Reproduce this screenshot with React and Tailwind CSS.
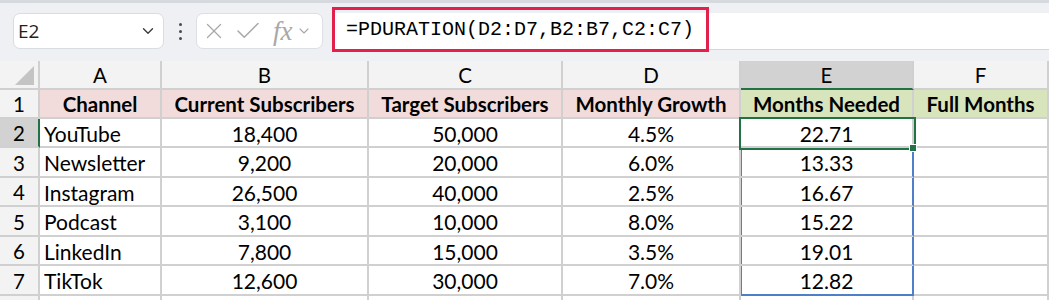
import { X, Check, ChevronDown } from 'lucide-react';

const cols = ['A', 'B', 'C', 'D', 'E', 'F'];

const headers = ['Channel', 'Current Subscribers', 'Target Subscribers', 'Monthly Growth', 'Months Needed', 'Full Months'];

const rows = [
  ['YouTube', '18,400', '50,000', '4.5%', '22.71'],
  ['Newsletter', '9,200', '20,000', '6.0%', '13.33'],
  ['Instagram', '26,500', '40,000', '2.5%', '16.67'],
  ['Podcast', '3,100', '10,000', '8.0%', '15.22'],
  ['LinkedIn', '7,800', '15,000', '3.5%', '19.01'],
  ['TikTok', '12,600', '30,000', '7.0%', '12.82'],
];

const cell = 'flex items-center pt-[2px] border-r-2 border-b-2 border-[#d0d0d0] text-[20.5px] text-black whitespace-nowrap overflow-hidden';

function Toolbar() {
  return (
    <div className="h-[61px] bg-[#eef0f3] border-t-[3px] border-[#d6d9dd] flex items-start pt-[10px]">
      {/* name box */}
      <div className="ml-[13px] w-[151px] h-[36px] bg-white border border-[#d9dce0] rounded-[7px] flex items-center justify-between pl-[4px] pr-[6px]">
        <span className="font-['Open_Sans',sans-serif] text-[19px] text-[#1f1f1f]">E2</span>
        <ChevronDown className="w-[18px] h-[18px] text-[#3a3a3a]" strokeWidth={1.8} />
      </div>
      <div className="w-[32px] h-[36px] flex flex-col items-center justify-center gap-[4px]">
        <div className="w-[3px] h-[3px] rounded-full bg-[#4a4a4a]" />
        <div className="w-[3px] h-[3px] rounded-full bg-[#4a4a4a]" />
        <div className="w-[3px] h-[3px] rounded-full bg-[#4a4a4a]" />
      </div>
      {/* cancel / enter / fx */}
      <div className="w-[127px] h-[36px] bg-white border border-[#dcdfe3] rounded-[7px] flex items-center pl-[4px] text-[#a8a8a8]">
        <X className="w-[26px] h-[26px]" strokeWidth={1.2} />
        <Check className="w-[30px] h-[30px] ml-[6px]" strokeWidth={1.2} />
        <span className="ml-[10px] font-['Liberation_Serif',serif] italic text-[27px] leading-none">fx</span>
        <ChevronDown className="w-[16px] h-[16px] ml-[3px]" strokeWidth={1.6} />
      </div>
      {/* formula input */}
      <div className="ml-[9px] flex-1 h-[37px] bg-white border-b border-[#d3d6da] flex items-start">
        <div className="-mt-[6px] w-[377px] h-[45px] border-[3px] border-[#e1204b] flex items-center pl-[11px]">
          <span className="font-['Liberation_Mono',monospace] text-[20px] text-black">=PDURATION(D2:D7,B2:B7,C2:C7)</span>
        </div>
      </div>
    </div>
  );
}

export default function App() {
  return (
    <div className="w-[1049px] h-[300px] overflow-hidden bg-white font-['Lato',sans-serif]">
      <Toolbar />
      <div className="grid grid-cols-[40px_122px_207px_194px_178px_173px_1fr] grid-rows-[29px_29px_29px_30px_29px_30px_29px_30px_20px]">
        {/* corner */}
        <div className="bg-[#f3f3f3] border-r-2 border-b-2 border-[#d0d0d0] flex items-end justify-end pr-[4px] pb-[3px]">
          <div className="w-0 h-0 border-l-[19px] border-l-transparent border-b-[19px] border-b-[#c4c4c4]" />
        </div>
        {cols.map((c) =>
          c === 'E' ? (
            <div key={c} className={`${cell} justify-center bg-[#d2d2d2] border-b-[#217346] text-[#217346]`}>{c}</div>
          ) : (
            <div key={c} className={`${cell} justify-center bg-[#f3f3f3]`}>{c}</div>
          )
        )}

        {/* row 1 */}
        <div className={`${cell} justify-center bg-[#f3f3f3]`}>1</div>
        {headers.map((h, i) => (
          <div key={h} className={`${cell} justify-center font-bold ${i < 4 ? 'bg-[#f2dcdb]' : 'bg-[#d8e4bc]'}`}>{h}</div>
        ))}

        {rows.map((r, ri) => (
          <Row key={r[0]} r={r} n={ri + 2} last={ri === rows.length - 1} />
        ))}

        {/* row 8 (cut off) */}
        <div className={`${cell} bg-[#f3f3f3]`} />
        <div className={cell} />
        <div className={cell} />
        <div className={cell} />
        <div className={cell} />
        <div className={cell} />
        <div className={cell} />
      </div>
    </div>
  );
}

function Row({ r, n, last }) {
  const active = n === 2;
  return (
    <>
      {active ? (
        <div className={`${cell} justify-center bg-[#d2d2d2] border-r-[#217346] text-[#217346]`}>{n}</div>
      ) : (
        <div className={`${cell} justify-center bg-[#f3f3f3]`}>{n}</div>
      )}
      <div className={`${cell} pl-[4px] text-[21px]`}>{r[0]}</div>
      <div className={`${cell} justify-center text-[21px]`}>{r[1]}</div>
      <div className={`${cell} justify-center text-[21px]`}>{r[2]}</div>
      <div className={`${cell} justify-center text-[21px]`}>{r[3]}</div>
      {active ? (
        <div className={`${cell} justify-center text-[21px] relative z-10 overflow-visible outline-2 outline-[#217346]`}>
          {r[4]}
          <div className="absolute -right-[5px] -bottom-[6px] w-[8px] h-[8px] bg-[#217346] border border-white" />
        </div>
      ) : (
        <div
          className={`${cell} justify-center text-[21px] border-r-[#4f7fc9] shadow-[inset_1px_0_0_#4f7fc9] ${last ? 'border-b-[#4f7fc9]' : ''}`}
        >
          {r[4]}
        </div>
      )}
      <div className={cell} />
    </>
  );
}
